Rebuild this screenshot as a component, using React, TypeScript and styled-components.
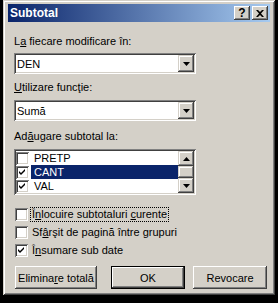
import styled, { createGlobalStyle } from 'styled-components';

const GlobalStyle = createGlobalStyle`
    html, body {
        margin: 0;
        padding: 0;
        background: #000;
    }
    body {
        font-family: "Liberation Sans", Arial, sans-serif;
        font-size: 11px;
        color: #000;
    }
`

const Screen = styled.div`
    width: 278px;
    height: 303px;
    padding-left: 3px;
    box-sizing: border-box;
    overflow: hidden;
`

const Window = styled.div`
    width: 272px;
    height: 295px;
    box-sizing: border-box;
    background: #d4d0c8;
    padding: 4px 5px 0 5px;
    box-shadow: inset 1px 1px #d4d0c8, inset -1px -1px #404040,
        inset 2px 2px #fff, inset -2px -2px #808080;
    display: flex;
    flex-direction: column;
`

const TitleBar = styled.div`
    height: 18px;
    display: flex;
    align-items: center;
    padding: 0 2px 0 2px;
    background: linear-gradient(to right, #0a246a, #a6caf0);
    color: #fff;
    font-weight: bold;
    font-size: 12px;
`

const Title = styled.span`
    flex: 1;
`

const CaptionButton = styled.div`
    width: 16px;
    height: 14px;
    box-sizing: border-box;
    background: #d4d0c8;
    color: #000;
    display: flex;
    align-items: center;
    justify-content: center;
    font-size: 12px;
    font-weight: bold;
    margin-left: ${props => props.gap || 0}px;
    box-shadow: inset -1px -1px #404040, inset 1px 1px #fff, inset -2px -2px #808080;
`

const Body = styled.div`
    display: flex;
    flex-direction: column;
    padding: 0 3px 0 6px;
`

const Label = styled.div`
    line-height: 13px;
    margin-top: ${props => props.top}px;
    margin-bottom: ${props => props.bottom}px;
    white-space: nowrap;
`

const Combo = styled.div`
    width: 182px;
    height: 21px;
    box-sizing: border-box;
    background: #fff;
    display: flex;
    align-items: center;
    padding: 2px;
    box-shadow: inset 1px 1px #808080, inset -1px -1px #fff,
        inset 2px 2px #404040, inset -2px -2px #d4d0c8;
`

const ComboText = styled.span`
    flex: 1;
    padding-left: 1px;
`

const ArrowButton = styled.div`
    width: 16px;
    height: ${props => props.h || 17}px;
    box-sizing: border-box;
    background: #d4d0c8;
    display: flex;
    align-items: center;
    justify-content: center;
    box-shadow: inset -1px -1px #404040, inset 1px 1px #d4d0c8,
        inset -2px -2px #808080, inset 2px 2px #fff;
`

const Arrow = ({ up }) => (
    <svg width="7" height="4" viewBox="0 0 7 4">
        {up
            ? <polygon points="3.5,0 7,4 0,4" fill="#000"/>
            : <polygon points="0,0 7,0 3.5,4" fill="#000"/>}
    </svg>
)

const ListBox = styled.div`
    width: 182px;
    height: 46px;
    box-sizing: border-box;
    background: #fff;
    padding: 2px;
    display: flex;
    box-shadow: inset 1px 1px #808080, inset -1px -1px #fff,
        inset 2px 2px #404040, inset -2px -2px #d4d0c8;
`

const Items = styled.div`
    flex: 1;
    display: flex;
    flex-direction: column;
`

const Item = styled.div`
    height: 14px;
    display: flex;
    align-items: center;
`

const ItemText = styled.span`
    flex: 1;
    height: 14px;
    line-height: 14px;
    padding-left: 3px;
    margin-left: 2px;
    background: ${props => props.selected ? '#0a246a' : 'transparent'};
    color: ${props => props.selected ? '#fff' : '#000'};
`

const ScrollBar = styled.div`
    width: 16px;
    display: flex;
    flex-direction: column;
    background: #e8e6e0;
`

const Thumb = styled.div`
    flex: 1;
    background: #d4d0c8;
    box-shadow: inset -1px -1px #404040, inset 1px 1px #d4d0c8,
        inset -2px -2px #808080, inset 2px 2px #fff;
`

const Box = styled.div`
    width: 13px;
    height: 13px;
    box-sizing: border-box;
    background: #fff;
    flex-shrink: 0;
    display: flex;
    align-items: center;
    justify-content: center;
    box-shadow: inset 1px 1px #808080, inset -1px -1px #fff,
        inset 2px 2px #404040, inset -2px -2px #d4d0c8;
`

const Check = () => (
    <svg width="7" height="7" viewBox="0 0 7 7">
        <path d="M0 2 L2 4 L6 0 L6 2 L2 6 L0 4 Z" fill="#000"/>
    </svg>
)

const CheckList = styled.div`
    display: flex;
    flex-direction: column;
    gap: 4px;
    margin-top: 12px;
    padding-left: 1px;
`

const CheckRow = styled.label`
    display: flex;
    align-items: center;
    height: 14px;
    gap: 3px;
`

const CheckText = styled.span`
    line-height: 13px;
    padding: 0 1px;
    outline: ${props => props.focused ? '1px dotted #000' : 'none'};
`

const Buttons = styled.div`
    display: flex;
    margin-top: 9px;
    padding-left: 1px;
`

const Button = styled.div`
    width: ${props => props.w}px;
    height: 23px;
    margin-left: ${props => props.gap || 0}px;
    box-sizing: border-box;
    display: flex;
    align-items: center;
    justify-content: center;
    background: #d4d0c8;
    box-shadow: ${props => props.primary
        ? 'inset 0 0 0 1px #000, inset -2px -2px #404040, inset 2px 2px #fff, inset -3px -3px #808080'
        : 'inset -1px -1px #404040, inset 1px 1px #fff, inset -2px -2px #808080'};
`

const CheckItem = ({ checked, children, focused }) => (
    <CheckRow>
        <Box>{checked && <Check/>}</Box>
        <CheckText focused={focused}>{children}</CheckText>
    </CheckRow>
)

const App = () => {
    const fields = [
        { name: 'PRETP', checked: false },
        { name: 'CANT', checked: true, selected: true },
        { name: 'VAL', checked: true },
    ]

    return (
        <Screen>
            <GlobalStyle/>
            <Window>
                <TitleBar>
                    <Title>Subtotal</Title>
                    <CaptionButton>?</CaptionButton>
                    <CaptionButton gap={2}>
                        <svg width="8" height="7" viewBox="0 0 8 7">
                            <path d="M0 0 L2 0 L4 2 L6 0 L8 0 L5 3.5 L8 7 L6 7 L4 5 L2 7 L0 7 L3 3.5 Z" fill="#000"/>
                        </svg>
                    </CaptionButton>
                </TitleBar>

                <Body>
                    <Label top={13} bottom={5}>L<u>a</u> fiecare modificare în:</Label>
                    <Combo>
                        <ComboText>DEN</ComboText>
                        <ArrowButton><Arrow/></ArrowButton>
                    </Combo>

                    <Label top={7} bottom={6}><u>U</u>tilizare funcţie:</Label>
                    <Combo>
                        <ComboText>Sumă</ComboText>
                        <ArrowButton><Arrow/></ArrowButton>
                    </Combo>

                    <Label top={9} bottom={6}>Ad<u>ă</u>ugare subtotal la:</Label>
                    <ListBox>
                        <Items>
                            {fields.map(f => (
                                <Item key={f.name}>
                                    <Box>{f.checked && <Check/>}</Box>
                                    <ItemText selected={f.selected}>{f.name}</ItemText>
                                </Item>
                            ))}
                        </Items>
                        <ScrollBar>
                            <ArrowButton h={15}><Arrow up/></ArrowButton>
                            <Thumb/>
                            <ArrowButton h={15}><Arrow/></ArrowButton>
                        </ScrollBar>
                    </ListBox>

                    <CheckList>
                        <CheckItem focused>Î<u>n</u>locuire subtotaluri <u>c</u>urente</CheckItem>
                        <CheckItem>Sf<u>â</u>rşit de pagină între grupuri</CheckItem>
                        <CheckItem checked>Î<u>n</u>sumare sub date</CheckItem>
                    </CheckList>

                    <Buttons>
                        <Button w={82}>Elimina<u>r</u>e totală</Button>
                        <Button w={74} gap={14} primary>OK</Button>
                        <Button w={74} gap={8}>Revocare</Button>
                    </Buttons>
                </Body>
            </Window>
        </Screen>
    )
}

export default App;
